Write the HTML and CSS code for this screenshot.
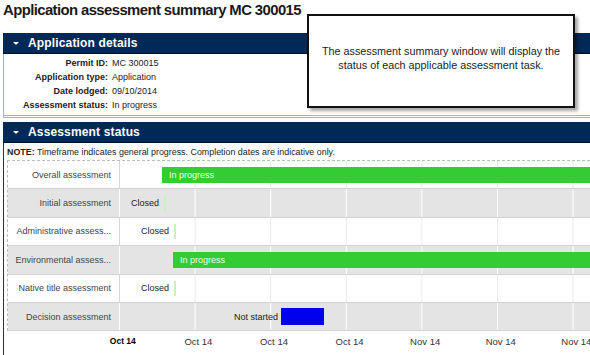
FILE: index.html
```html
<!DOCTYPE html>
<html>
<head>
<meta charset="utf-8">
<link rel="stylesheet" href="styles.css">
</head>
<body>
<div class="page">
  <h1 class="title">Application assessment summary MC 300015</h1>

  <section class="panel">
    <div class="panel-head"><span class="caret"></span>Application details</div>
    <div class="details">
      <div class="lbl">Permit ID:</div><div class="val">MC 300015</div>
      <div class="lbl">Application type:</div><div class="val">Application</div>
      <div class="lbl">Date lodged:</div><div class="val">09/10/2014</div>
      <div class="lbl">Assessment status:</div><div class="val">In progress</div>
    </div>
  </section>

  <section class="panel panel-status">
    <div class="panel-head"><span class="caret"></span>Assessment status</div>
    <div class="note"><b>NOTE:</b> Timeframe indicates general progress. Completion dates are indicative only.</div>
    <div class="gantt">
      <div class="row">
        <div class="name">Overall assessment</div>
        <div class="chart"><div class="bar green" style="margin-left:42px">In progress</div></div>
      </div>
      <div class="row alt">
        <div class="name">Initial assessment</div>
        <div class="chart"><span class="status" style="margin-left:11px">Closed</span><span class="tick" style="margin-left:5px"></span></div>
      </div>
      <div class="row">
        <div class="name">Administrative assess...</div>
        <div class="chart"><span class="status" style="margin-left:21px">Closed</span><span class="tick" style="margin-left:5px"></span></div>
      </div>
      <div class="row alt">
        <div class="name">Environmental assess...</div>
        <div class="chart"><div class="bar green" style="margin-left:53px">In progress</div></div>
      </div>
      <div class="row">
        <div class="name">Native title assessment</div>
        <div class="chart"><span class="status" style="margin-left:21px">Closed</span><span class="tick" style="margin-left:5px"></span></div>
      </div>
      <div class="row alt">
        <div class="name">Decision assessment</div>
        <div class="chart"><span class="status" style="margin-left:114px">Not started</span><div class="bar blue" style="margin-left:3px;width:43px"></div></div>
      </div>
    </div>
    <div class="axis">
      <span class="first">Oct 14</span><span>Oct 14</span><span>Oct 14</span><span>Oct 14</span><span>Nov 14</span><span>Nov 14</span><span>Nov 14</span>
    </div>
  </section>

  <div class="callout">The assessment summary window will display the status of each applicable assessment task.</div>
</div>
</body>
</html>
```

FILE: styles.css
```css
html, body {
  margin: 0;
  padding: 0;
  background: #fff;
  overflow: hidden;
}
body {
  font-family: "Liberation Sans", Arial, sans-serif;
  color: #222;
  width: 590px;
  height: 355px;
}
.page {
  position: relative;
  width: 590px;
  height: 355px;
}
.title {
  margin: 0;
  padding: 2px 0 0 3px;
  height: 33px;
  box-sizing: border-box;
  font-size: 14.9px;
  font-weight: bold;
  color: #1a1a1a;
  letter-spacing: -0.6px;
}
.panel {
  margin-left: 3px;
  border-left: 1px solid #a9b3c0;
}
.panel-head {
  height: 20px;
  margin-left: -1px;
  background: #012957;
  color: #fff;
  font-weight: bold;
  font-size: 12px;
  letter-spacing: 0.15px;
  line-height: 20px;
  display: flex;
  align-items: center;
  padding-left: 10px;
  border-bottom: 1px solid #000e25;
}
.caret {
  width: 0;
  height: 0;
  border-left: 3px solid transparent;
  border-right: 3px solid transparent;
  border-top: 3px solid #fff;
  margin-right: 9px;
}
.details {
  display: grid;
  grid-template-columns: 104px auto;
  column-gap: 4px;
  row-gap: 0;
  padding: 2px 0 3px;
  font-size: 9px;
  line-height: 14px;
  border-bottom: 3px double #9fb2c6;
}
.lbl {
  text-align: right;
  font-weight: bold;
}
.panel-status {
  margin-top: 4px;
  border-left: 1px solid #2a2f3a;
  height: 240px;
}
.note {
  font-size: 8.9px;
  padding: 4px 0 0 3px;
  height: 17px;
  box-sizing: border-box;
}
.gantt {
  margin-left: 3px;
  border-top: 1px dashed #bbb;
  border-left: 1px dashed #bbb;
}
.row {
  display: flex;
  height: 28.4px;
  box-sizing: border-box;
  border-bottom: 1px solid #d2d2d2;
  background: #fff;
}
.row.alt {
  background: #e4e4e4;
}
.name {
  width: 112px;
  flex: none;
  box-sizing: border-box;
  text-align: right;
  padding-right: 8px;
  font-size: 9px;
  color: #444;
  display: flex;
  align-items: center;
  justify-content: flex-end;
  border-right: 1px solid #d8d8d8;
  white-space: nowrap;
}
.row.alt .name {
  border-right-color: #fff;
}
.chart {
  flex: 1;
  display: flex;
  align-items: center;
  background-image: linear-gradient(to right, #e8e8e8 1px, transparent 1px);
  background-size: 75.6px 100%;
  background-position: 74.6px 0;
  font-size: 9px;
  color: #222;
}
.row.alt .chart {
  background-image: linear-gradient(to right, #ffffff 1px, transparent 1px);
}
.bar {
  height: 16px;
  line-height: 16px;
  flex: 1;
  box-sizing: border-box;
}
.bar.green {
  background: #33cc33;
  color: #eaffea;
  padding-left: 7px;
  font-size: 9px;
}
.bar.blue {
  flex: none;
  background: #0000ee;
  height: 17px;
}
.tick {
  width: 2px;
  height: 15px;
  background: #c9f0c0;
}
.axis {
  display: flex;
  padding-left: 81px;
  padding-top: 5px;
  font-size: 9.5px;
  color: #333;
}
.axis span {
  width: 75.6px;
  text-align: center;
  flex: none;
}
.axis .first {
  font-weight: 900;
  font-size: 8.5px;
  color: #000;
}
.callout {
  position: absolute;
  left: 307px;
  top: 14px;
  width: 268px;
  height: 94px;
  box-sizing: border-box;
  border: 2px solid #111;
  background: #fff;
  box-shadow: 3px 3px 3px rgba(0,0,0,0.35);
  font-size: 10.8px;
  color: #222;
  text-align: center;
  padding: 29px 5px 0;
  line-height: 13.5px;
}
```
